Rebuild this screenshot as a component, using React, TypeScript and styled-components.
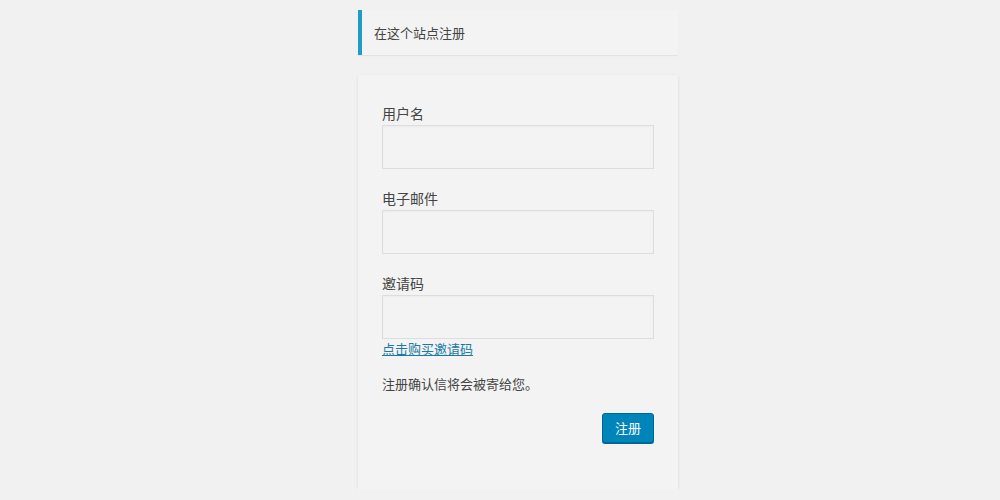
import React from 'react';
import styled, { createGlobalStyle } from 'styled-components';

const GlobalStyle = createGlobalStyle`
    html, body {
        margin: 0;
        padding: 0;
        background: #f1f1f1;
    }
    body {
        font-family: "Noto Sans CJK SC", "Liberation Sans", sans-serif;
        color: #444444;
    }
`;

export default function App() {
    return (
        <>
            <GlobalStyle />
            <SLogin>
                <SMessage>在这个站点注册</SMessage>
                <SForm onSubmit={(e) => e.preventDefault()}>
                    <SField>
                        <SLabel htmlFor="user_login">用户名</SLabel>
                        <SInput id="user_login" type="text" />
                    </SField>
                    <SField>
                        <SLabel htmlFor="user_email">电子邮件</SLabel>
                        <SInput id="user_email" type="email" />
                    </SField>
                    <SField $last>
                        <SLabel htmlFor="invite_code">邀请码</SLabel>
                        <SInput id="invite_code" type="text" />
                    </SField>
                    <SLink href="#">点击购买邀请码</SLink>
                    <SNotice>注册确认信将会被寄给您。</SNotice>
                    <SSubmitRow>
                        <SButton type="submit">注册</SButton>
                    </SSubmitRow>
                </SForm>
            </SLogin>
        </>
    );
}

const SLogin = styled.div`
    width: 320px;
    margin-left: calc(50% - 142px);
    padding-top: 10px;
    display: flex;
    flex-direction: column;
    gap: 20px;
`;

const SMessage = styled.p`
    margin: 0;
    height: 45px;
    box-sizing: border-box;
    display: flex;
    align-items: center;
    padding: 0 12px;
    border-left: 4px solid #1e9cc6;
    background: #f3f3f3;
    box-shadow: 0 1px 1px 0 rgba(0, 0, 0, 0.06);
    font-size: 13px;
    color: #444444;
`;

const SForm = styled.form`
    box-sizing: border-box;
    padding: 28px 24px 46px;
    background: #f3f3f3;
    box-shadow: 0 1px 3px rgba(0, 0, 0, 0.1);
    display: flex;
    flex-direction: column;
`;

const SField = styled.div<{ $last?: boolean }>`
    display: flex;
    flex-direction: column;
    gap: 2px;
    margin-bottom: ${(p) => (p.$last ? '0' : '19px')};
`;

const SLabel = styled.label`
    font-size: 14px;
    line-height: 20px;
    color: #444444;
`;

const SInput = styled.input`
    box-sizing: border-box;
    width: 100%;
    height: 44px;
    margin: 0;
    padding: 3px 6px;
    border: 1px solid #dddddd;
    background: #f3f3f3;
    box-shadow: inset 0 1px 2px rgba(0, 0, 0, 0.03);
    font-size: 18px;
    outline: none;
`;

const SLink = styled.a`
    align-self: flex-start;
    font-size: 13px;
    line-height: 20px;
    color: #1a7aa5;
    text-decoration: underline;
`;

const SNotice = styled.p`
    margin: 15px 0 0;
    font-size: 13px;
    line-height: 20px;
    color: #444444;
`;

const SSubmitRow = styled.div`
    display: flex;
    justify-content: flex-end;
    margin-top: 19px;
`;

const SButton = styled.button`
    height: 30px;
    padding: 0 12px;
    border: 1px solid #006799;
    border-radius: 3px;
    background: #0085ba;
    box-shadow: 0 1px 0 #006799;
    color: #ffffff;
    font-family: "Noto Sans CJK SC", "Liberation Sans", sans-serif;
    font-size: 13px;
    line-height: 28px;
    cursor: pointer;
`;
